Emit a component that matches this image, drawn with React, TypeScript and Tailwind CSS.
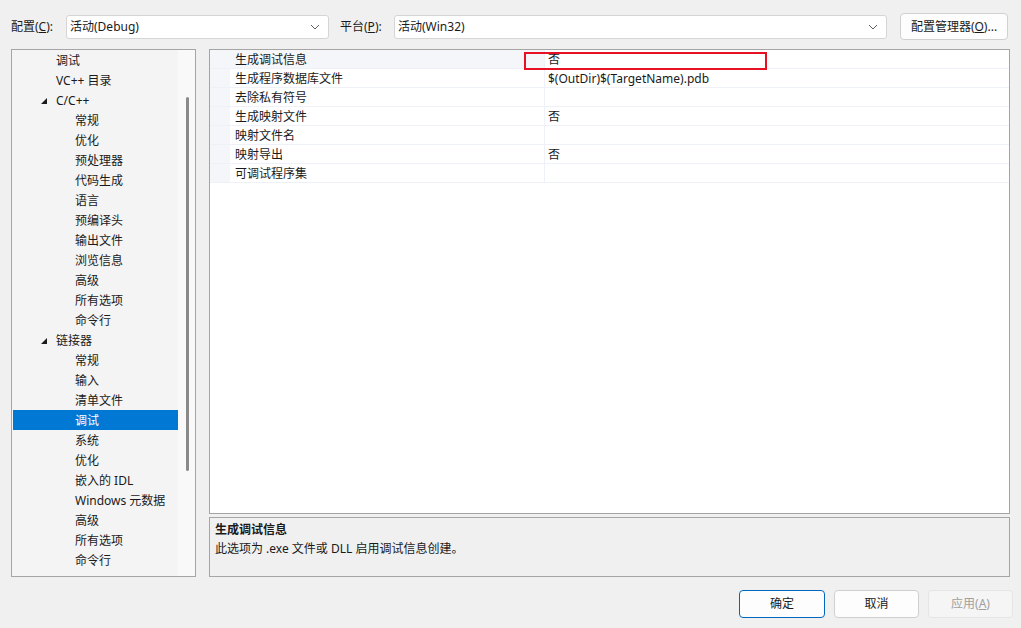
import React from 'react';

const FONT = { fontFamily: '"Noto Sans", "Noto Sans CJK SC", sans-serif' };

type TreeItem = { label: string; depth: 1 | 2; expander?: 'open' | 'closed'; selected?: boolean };

const treeItems: TreeItem[] = [
  { label: '调试', depth: 1 },
  { label: 'VC++ 目录', depth: 1 },
  { label: 'C/C++', depth: 1, expander: 'open' },
  { label: '常规', depth: 2 },
  { label: '优化', depth: 2 },
  { label: '预处理器', depth: 2 },
  { label: '代码生成', depth: 2 },
  { label: '语言', depth: 2 },
  { label: '预编译头', depth: 2 },
  { label: '输出文件', depth: 2 },
  { label: '浏览信息', depth: 2 },
  { label: '高级', depth: 2 },
  { label: '所有选项', depth: 2 },
  { label: '命令行', depth: 2 },
  { label: '链接器', depth: 1, expander: 'open' },
  { label: '常规', depth: 2 },
  { label: '输入', depth: 2 },
  { label: '清单文件', depth: 2 },
  { label: '调试', depth: 2, selected: true },
  { label: '系统', depth: 2 },
  { label: '优化', depth: 2 },
  { label: '嵌入的 IDL', depth: 2 },
  { label: 'Windows 元数据', depth: 2 },
  { label: '高级', depth: 2 },
  { label: '所有选项', depth: 2 },
  { label: '命令行', depth: 2 },
];

const props = [
  { name: '生成调试信息', value: '否', selected: true },
  { name: '生成程序数据库文件', value: '$(OutDir)$(TargetName).pdb' },
  { name: '去除私有符号', value: '' },
  { name: '生成映射文件', value: '否' },
  { name: '映射文件名', value: '' },
  { name: '映射导出', value: '否' },
  { name: '可调试程序集', value: '' },
];

const Chevron = () => (
  <svg width="10" height="6" viewBox="0 0 10 6" className="shrink-0">
    <path d="M1 1l4 4 4-4" fill="none" stroke="#5f5f5f" strokeWidth="1" />
  </svg>
);

const Dropdown = ({ value, width }: { value: string; width: string }) => (
  <div className={`${width} h-[24px] flex items-center justify-between bg-white border border-[#d5d5d5] rounded-[3px] pl-[3px] pr-[8px]`}>
    <span className="pt-[1px]">{value}</span>
    <Chevron />
  </div>
);

const App = () => {
  return (
    <div className="w-[1021px] h-[628px] bg-[#f0f0f0] text-[12px] text-[#1a1a1a] flex flex-col overflow-hidden" style={FONT}>
      {/* top bar */}
      <div className="flex items-center h-[27px] mt-[13px] pl-[11px]">
        <span className="w-[55px] pt-[1px]">配置(<span className="underline">C</span>):</span>
        <Dropdown value="活动(Debug)" width="w-[263px]" />
        <span className="ml-[11px] w-[54px] pt-[1px]">平台(<span className="underline">P</span>):</span>
        <Dropdown value="活动(Win32)" width="w-[493px]" />
        <button className="ml-[13px] w-[108px] h-[27px] bg-[#fdfdfd] border border-[#d0d0d0] rounded-[4px] text-[12px]">
          配置管理器(<span className="underline">O</span>)...
        </button>
      </div>

      {/* main */}
      <div className="flex mt-[9px] pl-[11px] h-[528px]">
        {/* tree */}
        <div className="w-[185px] h-full border border-[#a5a5a5] bg-[#f4f4f4] flex overflow-hidden">
          <div className="flex-1 overflow-hidden">
            {treeItems.map((it, i) => (
              <div
                key={i}
                className={`relative h-[20px] flex items-center pt-[2px] ${it.selected ? 'bg-[#0078d4] text-white ml-[1px]' : ''}`}
                style={{ paddingLeft: it.depth === 1 ? 44 : it.selected ? 62 : 63 }}
              >
                {it.expander === 'open' && (
                  <svg width="6" height="6" viewBox="0 0 6 6" className="absolute left-[29px] top-[8px]">
                    <polygon points="6,0 6,6 0,6" fill="#1a1a1a" />
                  </svg>
                )}
                <span>{it.label}</span>
              </div>
            ))}
          </div>
          <div className="w-[17px] h-full bg-[#f9f9f9]">
            <div className="ml-[8px] mt-[47px] w-[3px] h-[374px] bg-[#8a8a8a] rounded-[2px]" />
          </div>
        </div>

        {/* right column */}
        <div className="ml-[13px] w-[801px] flex flex-col">
          <div className="relative h-[465px] border border-[#a5a5a5] bg-white">
            {props.map((p, i) => (
              <div key={i} className="flex h-[19px] border-b border-[#eef1f7]">
                <div className="w-[20px] bg-[#f4f6fa]" />
                <div className={`w-[315px] pl-[5px] pt-[2px] flex items-center border-r border-[#eef1f7] ${p.selected ? 'bg-[#f4f6fa]' : ''}`}>
                  {p.name}
                </div>
                <div className="flex-1 pl-[3px] pt-[2px] flex items-center">{p.value}</div>
              </div>
            ))}
            <div className="absolute left-[314px] top-[2px] w-[243px] h-[18px] border-2 border-[#e81123]" />
          </div>
          <div className="mt-[3px] h-[60px] border border-[#a5a5a5] bg-[#f0f0f0] px-[5px] pt-[2px]">
            <div className="font-bold leading-[19px]">生成调试信息</div>
            <div className="leading-[19px]">此选项为 .exe 文件或 DLL 启用调试信息创建。</div>
          </div>
        </div>
      </div>

      {/* buttons */}
      <div className="flex justify-end gap-[9px] mt-[13px] pr-[8px]">
        <button className="w-[86px] h-[28px] bg-[#fdfdfd] border border-[#0067c0] rounded-[4px]">确定</button>
        <button className="w-[85px] h-[28px] bg-[#fdfdfd] border border-[#d0d0d0] rounded-[4px]">取消</button>
        <button className="w-[85px] h-[28px] bg-[#f5f5f5] border border-[#e5e5e5] rounded-[4px] text-[#a0a0a0]">
          应用(<span className="underline">A</span>)
        </button>
      </div>
    </div>
  );
};

export default App;
